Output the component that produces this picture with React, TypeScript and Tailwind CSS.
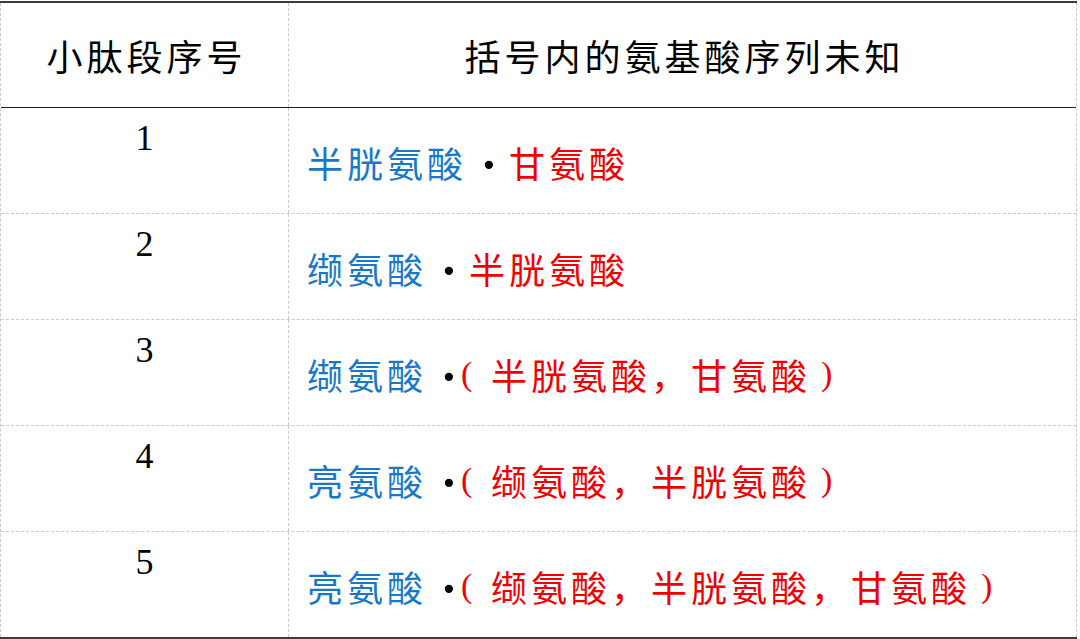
import React from "react";

const CJK = "[font-family:'Noto_Sans_CJK_SC','Noto_Sans_CJK_JP',sans-serif]";
const SERIF = "[font-family:'Liberation_Serif','Times_New_Roman',serif]";

type Row = {
  n: string;
  blue: string;
  red: string;
  paren: boolean;
};

const rows: Row[] = [
  { n: "1", blue: "半胱氨酸", red: "甘氨酸", paren: false },
  { n: "2", blue: "缬氨酸", red: "半胱氨酸", paren: false },
  { n: "3", blue: "缬氨酸", red: "半胱氨酸，甘氨酸", paren: true },
  { n: "4", blue: "亮氨酸", red: "缬氨酸，半胱氨酸", paren: true },
  { n: "5", blue: "亮氨酸", red: "缬氨酸，半胱氨酸，甘氨酸", paren: true },
];

function Dot() {
  return (
    <span className="flex w-[42px] h-[36px] items-center justify-center overflow-visible">
      <span className={`${SERIF} text-[70px] leading-[36px] text-black translate-y-[3px] translate-x-[1px]`}>·</span>
    </span>
  );
}

export default function App() {
  return (
    <div className="bg-white w-[1080px] h-[639px] pt-[1px]">
      <div className="w-[1077px] border-y-2 border-solid border-[#3c3c3c]">
        <div className="border-x border-dashed border-[#c9c9c9]">
          {/* header */}
          <div className="flex h-[105px] border-b border-solid border-[#1e1e1e]">
            <div className="w-[288px] shrink-0 border-r border-dashed border-[#c9c9c9] flex items-center justify-center">
              <span className={`${CJK} text-[36px] tracking-[4px] text-black pl-[4px]`}>小肽段序号</span>
            </div>
            <div className="flex-1 flex items-center justify-center">
              <span className={`${CJK} text-[36px] tracking-[4px] text-black pl-[4px]`}>括号内的氨基酸序列未知</span>
            </div>
          </div>
          {rows.map((r, i) => (
            <div
              key={r.n}
              className={`flex ${i < rows.length - 1 ? "h-[106px] border-b border-dashed border-[#c9c9c9]" : "h-[105px]"}`}
            >
              <div className="w-[288px] shrink-0 border-r border-dashed border-[#c9c9c9] flex justify-center pt-[12px]">
                <span className={`${SERIF} text-[36px] leading-none text-black`}>{r.n}</span>
              </div>
              <div className="flex-1 flex items-center pl-[18px] pt-[2px]">
                <span className={`${CJK} text-[36px] tracking-[4px] text-[#1878c8] leading-[36px]`}>{r.blue}</span>
                <Dot />
                {r.paren && (
                  <span className={`${SERIF} w-[22px] text-[34px] leading-[36px] text-[#f20000] -ml-[8px] mr-[8px]`}>(</span>
                )}
                <span className={`${CJK} text-[36px] tracking-[4px] text-[#f20000] leading-[36px]`}>{r.red}</span>
                {r.paren && (
                  <span className={`${SERIF} text-[34px] leading-[36px] text-[#f20000] pl-[10px]`}>)</span>
                )}
              </div>
            </div>
          ))}
        </div>
      </div>
    </div>
  );
}
